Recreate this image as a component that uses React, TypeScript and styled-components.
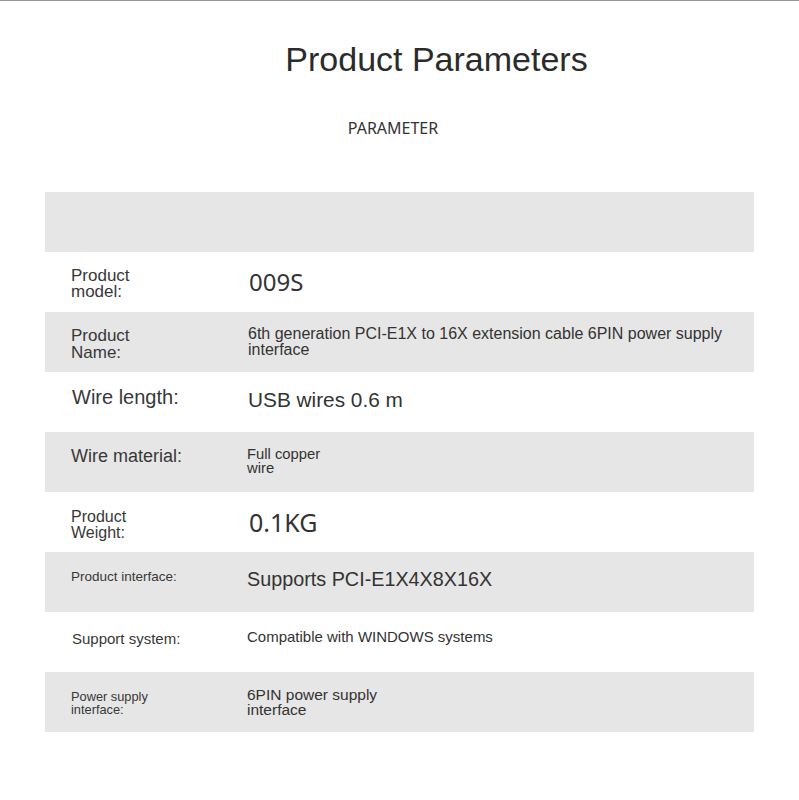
import React from "react";
import styled, { createGlobalStyle } from "styled-components";

const GlobalStyle = createGlobalStyle`
  html, body {
    margin: 0;
    padding: 0;
    background: #ffffff;
  }
  body {
    font-family: "Liberation Sans", Arial, sans-serif;
    color: #333333;
  }
`;

const Page = styled.div`
  width: 799px;
  height: 800px;
  box-sizing: border-box;
  border-top: 1px solid #979797;
  background: #ffffff;
  display: flex;
  flex-direction: column;
`;

const Title = styled.h1`
  margin: 38px 0 0;
  padding-left: 74px;
  text-align: center;
  font-family: "Liberation Sans", Arial, sans-serif;
  font-weight: 400;
  font-size: 34px;
  line-height: 40px;
  color: #2b2b2b;
`;

const Subtitle = styled.div`
  margin-top: 38px;
  padding-right: 13px;
  text-align: center;
  font-family: "Noto Sans", sans-serif;
  font-size: 16px;
  line-height: 22px;
  color: #333333;
`;

const Table = styled.div`
  margin: 53px 45px 0;
  display: flex;
  flex-direction: column;
`;

const HeaderRow = styled.div`
  height: 60px;
  background: #e6e6e6;
`;

const Row = styled.div<{ $shaded: boolean }>`
  height: 60px;
  box-sizing: border-box;
  padding-left: 26px;
  display: grid;
  grid-template-columns: 176px 1fr;
  align-items: center;
  background: ${(p) => (p.$shaded ? "#e6e6e6" : "#ffffff")};
`;

const offset = (dy: number) =>
  dy < 0 ? `0 0 ${-2 * dy}px 0` : `${2 * dy}px 0 0 0`;

const Label = styled.div<{ $size: number; $lh: number; $dy: number; $dx: number }>`
  font-family: "Liberation Sans", Arial, sans-serif;
  font-size: ${(p) => p.$size}px;
  line-height: ${(p) => p.$lh}px;
  color: #383838;
  margin: ${(p) => offset(p.$dy)};
  padding-left: ${(p) => p.$dx}px;
`;

const Value = styled.div<{ $size: number; $lh: number; $dy: number; $dx: number; $noto: boolean }>`
  font-family: ${(p) =>
    p.$noto ? `"Noto Sans", sans-serif` : `"Liberation Sans", Arial, sans-serif`};
  font-size: ${(p) => p.$size}px;
  line-height: ${(p) => p.$lh}px;
  color: #333333;
  margin: ${(p) => offset(p.$dy)};
  padding-left: ${(p) => p.$dx}px;
`;

type Item = {
  label: string[];
  ls: number;
  llh: number;
  ldy: number;
  ldx: number;
  value: string[];
  vs: number;
  vlh: number;
  vdy: number;
  vdx: number;
  noto?: boolean;
};

const items: Item[] = [
  { label: ["Product", "model:"], ls: 17, llh: 16.5, ldy: 2, ldx: 0, value: ["009S"], vs: 24, vlh: 30, vdy: 0, vdx: 2, noto: true },
  { label: ["Product", "Name:"], ls: 17, llh: 17, ldy: 2, ldx: 0, value: ["6th generation PCI-E1X to 16X extension cable 6PIN power supply", "interface"], vs: 16, vlh: 16, vdy: 0, vdx: 1 },
  { label: ["Wire length:"], ls: 20, llh: 23, ldy: -5, ldx: 1, value: ["USB wires 0.6 m"], vs: 20.8, vlh: 24, vdy: -2, vdx: 1 },
  { label: ["Wire material:"], ls: 18, llh: 21, ldy: -6, ldx: 0, value: ["Full copper", "wire"], vs: 14.8, vlh: 14, vdy: -1, vdx: 0 },
  { label: ["Product", "Weight:"], ls: 16, llh: 16, ldy: 3, ldx: 0, value: ["0.1KG"], vs: 25, vlh: 30, vdy: 0, vdx: 2, noto: true },
  { label: ["Product interface:"], ls: 13.5, llh: 16, ldy: -5, ldx: 0, value: ["Supports PCI-E1X4X8X16X"], vs: 19.8, vlh: 23, vdy: -3, vdx: 0 },
  { label: ["Support system:"], ls: 15, llh: 17, ldy: -4, ldx: 1, value: ["Compatible with WINDOWS systems"], vs: 15, vlh: 17, vdy: -6, vdx: 0 },
  { label: ["Power supply", "interface:"], ls: 12.8, llh: 13, ldy: 1, ldx: 0, value: ["6PIN power supply", "interface"], vs: 15.5, vlh: 15.5, vdy: 0, vdx: 0 },
];

const Lines: React.FC<{ lines: string[] }> = ({ lines }) => (
  <>
    {lines.map((l, i) => (
      <React.Fragment key={i}>
        {i > 0 && <br />}
        {l}
      </React.Fragment>
    ))}
  </>
);

export default function App() {
  return (
    <>
      <GlobalStyle />
      <Page>
        <Title>Product Parameters</Title>
        <Subtitle>PARAMETER</Subtitle>
        <Table>
          <HeaderRow />
          {items.map((it, i) => (
            <Row key={i} $shaded={i % 2 === 1}>
              <Label $size={it.ls} $lh={it.llh} $dy={it.ldy} $dx={it.ldx}>
                <Lines lines={it.label} />
              </Label>
              <Value
                $size={it.vs}
                $lh={it.vlh}
                $dy={it.vdy}
                $dx={it.vdx}
                $noto={!!it.noto}
              >
                <Lines lines={it.value} />
              </Value>
            </Row>
          ))}
        </Table>
      </Page>
    </>
  );
}
